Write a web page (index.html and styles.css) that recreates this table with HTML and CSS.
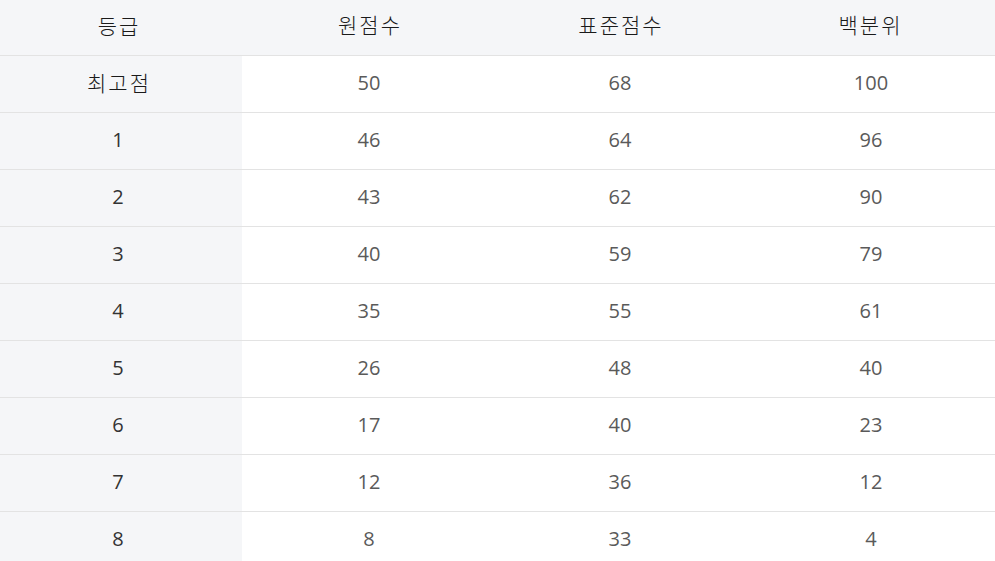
FILE: index.html
```html
<!DOCTYPE html>
<html lang="ko">
<head>
<meta charset="utf-8">
<link rel="stylesheet" href="styles.css">
</head>
<body>
<table class="grade-table">
  <colgroup>
    <col class="c1"><col class="c2"><col class="c3"><col class="c4">
  </colgroup>
  <thead>
    <tr><th class="label"><span class="ko">등급</span></th><th><span class="ko">원점수</span></th><th><span class="ko">표준점수</span></th><th><span class="ko">백분위</span></th></tr>
  </thead>
  <tbody>
    <tr><th class="label"><span class="ko">최고점</span></th><td>50</td><td>68</td><td>100</td></tr>
    <tr><th class="label">1</th><td>46</td><td>64</td><td>96</td></tr>
    <tr><th class="label">2</th><td>43</td><td>62</td><td>90</td></tr>
    <tr><th class="label">3</th><td>40</td><td>59</td><td>79</td></tr>
    <tr><th class="label">4</th><td>35</td><td>55</td><td>61</td></tr>
    <tr><th class="label">5</th><td>26</td><td>48</td><td>40</td></tr>
    <tr><th class="label">6</th><td>17</td><td>40</td><td>23</td></tr>
    <tr><th class="label">7</th><td>12</td><td>36</td><td>12</td></tr>
    <tr><th class="label">8</th><td>8</td><td>33</td><td>4</td></tr>
  </tbody>
</table>
</body>
</html>
```
FILE: styles.css
```css
html, body {
  margin: 0;
  padding: 0;
  background: #ffffff;
}
.grade-table {
  width: 995px;
  border-collapse: collapse;
  table-layout: fixed;
  font-family: "Open Sans", "Noto Sans CJK KR", sans-serif;
}
.c1 { width: 242px; }
.c2 { width: 254px; }
.c3 { width: 248px; }
.c4 { width: 251px; }
.grade-table th,
.grade-table td {
  padding: 0 0 2px 0;
  text-align: center;
  vertical-align: middle;
  border-bottom: 1px solid #e3e3e3;
  height: 54px;
  font-weight: 400;
  line-height: 24px;
}
.grade-table thead th {
  background: #f5f6f8;
  height: 51px;
  padding-bottom: 4px;
  color: #222;
}
.grade-table th.label {
  background: #f5f6f8;
  color: #333;
  font-size: 20px;
  padding-right: 6px;
}
.ko {
  font-family: "Noto Sans CJK KR", sans-serif;
  font-size: 21px;
  font-weight: 300;
  letter-spacing: 2px;
  margin-right: -2px;
  color: #1a1a1a;
}
.grade-table td {
  color: #5a5a5a;
  font-size: 20px;
}
.grade-table td:last-child {
  padding-left: 3px;
}
```
